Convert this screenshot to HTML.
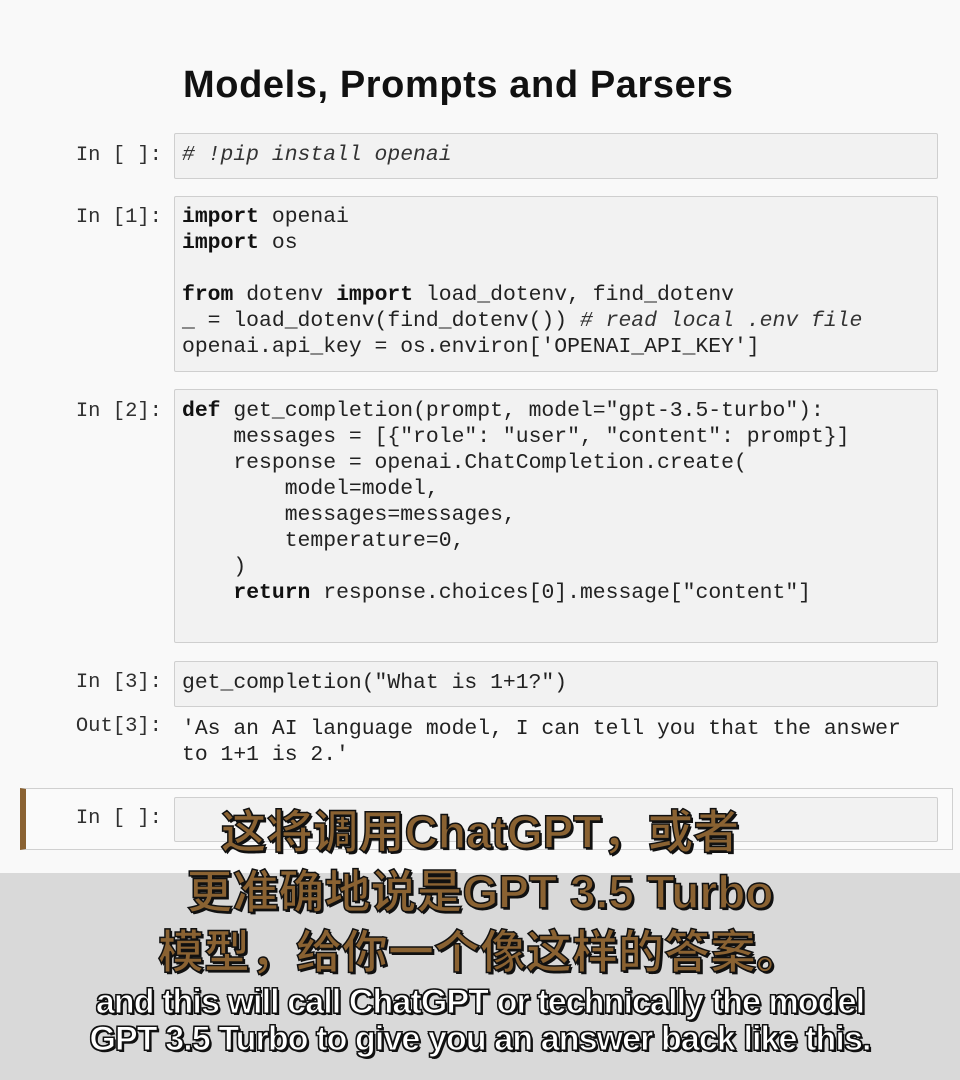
<!DOCTYPE html>
<html><head><meta charset="utf-8"><style>
body{margin:0;width:960px;height:1080px;background:#f9f9f9;position:relative;overflow:hidden;font-family:"Liberation Sans",sans-serif}
.t{position:absolute;left:183px;top:64px;font-size:38px;font-weight:bold;color:#111;letter-spacing:0.6px}
.cell{position:absolute;left:174px;width:762px;background:#f2f2f2;border:1px solid #cfcfcf;border-radius:2px}
pre{margin:0;font-family:"Liberation Mono",monospace;font-size:21.4px;line-height:26px;color:#222;position:absolute;left:182px;white-space:pre}
.p{position:absolute;font-family:"Liberation Mono",monospace;font-size:20.5px;color:#303030;right:798px;white-space:pre}
b{font-weight:bold;color:#111}
i{font-style:italic;color:#333}
.bot{position:absolute;left:0;top:873px;width:960px;height:207px;background:#d9d9d9}
.cn{position:absolute;left:0;width:960px;text-align:center;font-family:"Liberation Sans","Noto Sans CJK SC",sans-serif;font-weight:bold;font-size:46px;color:#8a6232;-webkit-text-stroke:1.5px #111;text-shadow:2px 2px 0 #111}
.en{position:absolute;left:0;width:960px;text-align:center;font-family:"Liberation Sans",sans-serif;font-weight:bold;font-size:34px;color:#fff;letter-spacing:-0.9px;-webkit-text-stroke:1px #111;text-shadow:1px 1px 0 #111,-1px -1px 0 #111,1px -1px 0 #111,-1px 1px 0 #111,2px 2px 0 #111}
</style></head><body>
<div class="t">Models, Prompts and Parsers</div>

<div class="p" style="top:144px">In [ ]:</div>
<div class="cell" style="top:133px;height:44px"></div>
<pre style="top:142px"><i># !pip install openai</i></pre>

<div class="p" style="top:206px">In [1]:</div>
<div class="cell" style="top:196px;height:174px"></div>
<pre style="top:204px"><b>import</b> openai
<b>import</b> os

<b>from</b> dotenv <b>import</b> load_dotenv, find_dotenv
_ = load_dotenv(find_dotenv()) <i># read local .env file</i>
openai.api_key = os.environ['OPENAI_API_KEY']</pre>

<div class="p" style="top:400px">In [2]:</div>
<div class="cell" style="top:389px;height:252px"></div>
<pre style="top:398px"><b>def</b> get_completion(prompt, model="gpt-3.5-turbo"):
    messages = [{"role": "user", "content": prompt}]
    response = openai.ChatCompletion.create(
        model=model,
        messages=messages,
        temperature=0,
    )
    <b>return</b> response.choices[0].message["content"]</pre>

<div class="p" style="top:671px">In [3]:</div>
<div class="cell" style="top:661px;height:44px"></div>
<pre style="top:670px">get_completion("What is 1+1?")</pre>

<div class="p" style="top:715px">Out[3]:</div>
<pre style="top:716px">'As an AI language model, I can tell you that the answer
to 1+1 is 2.'</pre>

<div style="position:absolute;left:20px;top:788px;width:926px;height:60px;border:1px solid #d0d0d0;border-left:6px solid #8a6232;background:#fafafa"></div>
<div class="p" style="top:807px">In [ ]:</div>
<div class="cell" style="top:797px;height:43px"></div>

<div class="bot"></div>
<div class="cn" style="top:796px">这将调用ChatGPT，或者</div>
<div class="cn" style="top:856px">更准确地说是GPT 3.5 Turbo</div>
<div class="cn" style="top:916px">模型，给你一个像这样的答案。</div>
<div class="en" style="top:983px">and this will call ChatGPT or technically the model</div>
<div class="en" style="top:1020px">GPT 3.5 Turbo to give you an answer back like this.</div>
</body></html>
